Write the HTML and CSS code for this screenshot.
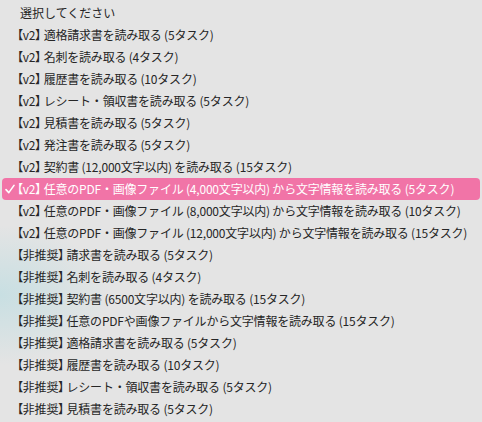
FILE: index.html
```html
<!DOCTYPE html>
<html lang="ja">
<head>
<meta charset="utf-8">
<title>選択</title>
<link rel="stylesheet" href="styles.css">
</head>
<body>
<ul class="menu">
  <li class="item placeholder">選択してください</li>
  <li class="item"><span class="b">【</span>v2<span class="b">】</span> 適格請求書を読み取る (5タスク)</li>
  <li class="item"><span class="b">【</span>v2<span class="b">】</span> 名刺を読み取る (4タスク)</li>
  <li class="item"><span class="b">【</span>v2<span class="b">】</span> 履歴書を読み取る (10タスク)</li>
  <li class="item"><span class="b">【</span>v2<span class="b">】</span> レシート・領収書を読み取る (5タスク)</li>
  <li class="item"><span class="b">【</span>v2<span class="b">】</span> 見積書を読み取る (5タスク)</li>
  <li class="item"><span class="b">【</span>v2<span class="b">】</span> 発注書を読み取る (5タスク)</li>
  <li class="item"><span class="b">【</span>v2<span class="b">】</span> 契約書 (12,000文字以内) を読み取る (15タスク)</li>
  <li class="item selected"><svg class="check" width="10" height="10" viewBox="0 0 10 10"><path d="M1 5.6 L3.8 8.6 L9 1.4" fill="none" stroke="#fff" stroke-width="1.6" stroke-linecap="round" stroke-linejoin="round"/></svg><span class="b">【</span>v2<span class="b">】</span> 任意のPDF・画像ファイル (4,000文字以内) から文字情報を読み取る (5タスク)</li>
  <li class="item"><span class="b">【</span>v2<span class="b">】</span> 任意のPDF・画像ファイル (8,000文字以内) から文字情報を読み取る (10タスク)</li>
  <li class="item"><span class="b">【</span>v2<span class="b">】</span> 任意のPDF・画像ファイル (12,000文字以内) から文字情報を読み取る (15タスク)</li>
  <li class="item"><span class="b">【</span>非推奨<span class="b">】</span> 請求書を読み取る (5タスク)</li>
  <li class="item"><span class="b">【</span>非推奨<span class="b">】</span> 名刺を読み取る (4タスク)</li>
  <li class="item"><span class="b">【</span>非推奨<span class="b">】</span> 契約書 (6500文字以内) を読み取る (15タスク)</li>
  <li class="item"><span class="b">【</span>非推奨<span class="b">】</span> 任意のPDFや画像ファイルから文字情報を読み取る (15タスク)</li>
  <li class="item"><span class="b">【</span>非推奨<span class="b">】</span> 適格請求書を読み取る (5タスク)</li>
  <li class="item"><span class="b">【</span>非推奨<span class="b">】</span> 履歴書を読み取る (10タスク)</li>
  <li class="item"><span class="b">【</span>非推奨<span class="b">】</span> レシート・領収書を読み取る (5タスク)</li>
  <li class="item"><span class="b">【</span>非推奨<span class="b">】</span> 見積書を読み取る (5タスク)</li>
</ul>
</body>
</html>
```

FILE: styles.css
```css
html, body {
  margin: 0;
  padding: 0;
  width: 482px;
  height: 422px;
  overflow: hidden;
}
body {
  background-color: #e4e4e4;
  background-image: radial-gradient(ellipse 110px 70px at 0px 295px, rgba(195, 222, 226, 0.85), rgba(210, 226, 228, 0) 100%);
  font-family: "Noto Sans CJK JP", "Noto Sans", sans-serif;
  font-size: 12px;
  letter-spacing: -0.2px;
  color: #262626;
}
.menu {
  list-style: none;
  margin: 0;
  padding: 2px 2px 0 2px;
}
.item {
  height: 22px;
  line-height: 22px;
  padding-left: 15px;
  white-space: nowrap;
  position: relative;
  border-radius: 4px;
}
.placeholder {
  padding-left: 18px;
  letter-spacing: 0;
}
.b {
  font-feature-settings: "palt";
}
.selected {
  background: #f174a7;
  color: #fff;
}
.check {
  position: absolute;
  left: 3px;
  top: 6px;
}
```
